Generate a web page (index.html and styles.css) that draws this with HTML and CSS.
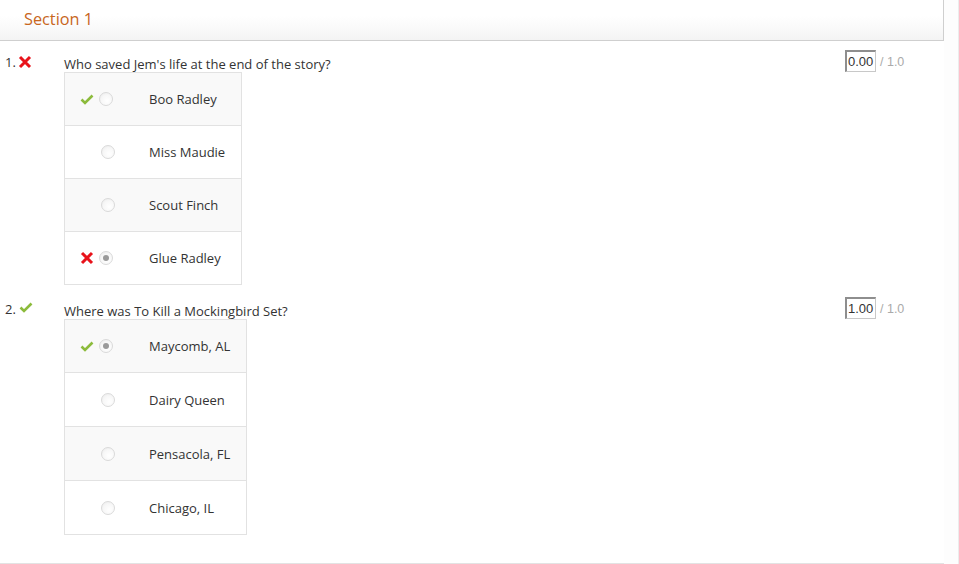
FILE: index.html
```html
<!DOCTYPE html>
<html>
<head>
<meta charset="utf-8">
<link rel="stylesheet" href="styles.css">
</head>
<body>
<div class="layout">
  <div class="page">
    <div class="header"><span class="title">Section 1</span></div>

    <div class="question">
      <div class="qhead">
        <div class="qnum">1.<svg class="mark-x" viewBox="0 0 14 14"><path d="M2 2 L12 12 M12 2 L2 12" stroke="#e8131b" stroke-width="3" stroke-linecap="butt"/></svg></div>
        <div class="qtext">Who saved Jem's life at the end of the story?</div>
        <div class="score"><span class="scorebox">0.00</span><span class="outof">/ 1.0</span></div>
      </div>
      <div class="options opts-1">
        <div class="opt odd">
          <div class="ctl has-mark"><svg class="mark-check" viewBox="0 0 14 11"><path d="M1.5 5.5 L5 9 L12.5 1.5" fill="none" stroke="#8cbb3c" stroke-width="2.6"/></svg><span class="radio"></span></div>
          <div class="lbl">Boo Radley</div>
        </div>
        <div class="opt">
          <div class="ctl"><span class="radio"></span></div>
          <div class="lbl">Miss Maudie</div>
        </div>
        <div class="opt odd">
          <div class="ctl"><span class="radio"></span></div>
          <div class="lbl">Scout Finch</div>
        </div>
        <div class="opt">
          <div class="ctl has-mark"><svg class="mark-x" viewBox="0 0 14 14"><path d="M2 2 L12 12 M12 2 L2 12" stroke="#e8131b" stroke-width="3"/></svg><span class="radio checked"></span></div>
          <div class="lbl">Glue Radley</div>
        </div>
      </div>
    </div>

    <div class="question">
      <div class="qhead">
        <div class="qnum">2.<svg class="mark-check" viewBox="0 0 14 11"><path d="M1.5 5.5 L5 9 L12.5 1.5" fill="none" stroke="#8cbb3c" stroke-width="2.6"/></svg></div>
        <div class="qtext">Where was To Kill a Mockingbird Set?</div>
        <div class="score"><span class="scorebox">1.00</span><span class="outof">/ 1.0</span></div>
      </div>
      <div class="options opts-2">
        <div class="opt odd">
          <div class="ctl has-mark"><svg class="mark-check" viewBox="0 0 14 11"><path d="M1.5 5.5 L5 9 L12.5 1.5" fill="none" stroke="#8cbb3c" stroke-width="2.6"/></svg><span class="radio checked"></span></div>
          <div class="lbl">Maycomb, AL</div>
        </div>
        <div class="opt">
          <div class="ctl"><span class="radio"></span></div>
          <div class="lbl">Dairy Queen</div>
        </div>
        <div class="opt odd">
          <div class="ctl"><span class="radio"></span></div>
          <div class="lbl">Pensacola, FL</div>
        </div>
        <div class="opt">
          <div class="ctl"><span class="radio"></span></div>
          <div class="lbl">Chicago, IL</div>
        </div>
      </div>
    </div>
  </div>
  <div class="strip"></div>
</div>
</body>
</html>
```

FILE: styles.css
```css
html, body {
  margin: 0;
  padding: 0;
  background: #fff;
}
body {
  font-family: "Open Sans", "Liberation Sans", sans-serif;
  font-size: 13px;
  color: #333;
  overflow: hidden;
}
.layout {
  display: flex;
  width: 959px;
  height: 564px;
}
.page {
  width: 944px;
  height: 563px;
  border-bottom: 1px solid #e3e3e3;
  box-sizing: content-box;
}
.strip {
  width: 14px;
  height: 564px;
  border-right: 1px solid #ececec;
  background: #fdfdfd;
}
.header {
  border-bottom: 1px solid #cfcfcf;
  border-right: 1px solid #cfcfcf;
  box-sizing: border-box;
  height: 41px;
  background: linear-gradient(#ffffff 0%, #ffffff 40%, #f4f4f4 100%);
  padding-left: 24px;
  display: flex;
  align-items: center;
  padding-bottom: 3px;
}
.title {
  color: #c8661c;
  font-size: 16.3px;
}
.question {
  padding-top: 9px;
}
.question + .question {
  padding-top: 12px;
}
.qhead {
  display: flex;
  align-items: flex-start;
  height: 22px;
}
.qnum {
  width: 59px;
  padding-left: 5px;
  padding-top: 3px;
  line-height: 18px;
  display: flex;
  align-items: center;
  color: #333;
}
.qnum .mark-x {
  margin-left: 2px;
}
.qnum .mark-check {
  margin-left: 3px;
  margin-top: -3px;
}
.qtext {
  flex: 1;
  padding-top: 5px;
  line-height: 18px;
  font-size: 13px;
}
.score {
  width: 99px;
  display: flex;
  align-items: center;
  font-family: "Liberation Sans", Arial, sans-serif;
  font-size: 13px;
}
.scorebox {
  display: inline-block;
  width: 31px;
  height: 22px;
  box-sizing: border-box;
  border-style: solid;
  border-color: #8e8e8e #c8c8c8 #c8c8c8 #8e8e8e;
  border-width: 2px 1px 1px 2px;
  line-height: 19px;
  padding-left: 1px;
  color: #333;
}
.outof {
  color: #aaa;
  margin-left: 4px;
  margin-top: 1px;
  font-size: 12.5px;
}
.options {
  margin-left: 64px;
  border: 1px solid #e2e2e2;
  border-bottom: none;
  display: flex;
  flex-direction: column;
}
.opts-1 { width: 176px; }
.opts-2 { width: 181px; }
.opt {
  display: flex;
  align-items: center;
  height: 53px;
  border-bottom: 1px solid #e2e2e2;
  box-sizing: border-box;
  background: #fff;
}
.opts-2 .opt + .opt {
  height: 54px;
}
.opt.odd {
  background: #f9f9f9;
}
.ctl {
  width: 84px;
  box-sizing: border-box;
  padding-left: 36px;
  display: flex;
  align-items: center;
}
.ctl.has-mark {
  padding-left: 15px;
}
.ctl .mark-check,
.ctl .mark-x {
  margin-right: 5px;
}
.mark-x {
  width: 14px;
  height: 14px;
  display: block;
}
.mark-check {
  width: 14px;
  height: 11px;
  display: block;
}
.radio {
  display: inline-block;
  width: 14px;
  height: 14px;
  box-sizing: border-box;
  border-radius: 50%;
  border: 1px solid #dadada;
  background: radial-gradient(circle at 60% 65%, #ffffff 0%, #f7f7f7 55%, #e8e8e8 100%);
  position: relative;
}
.radio.checked::after {
  content: "";
  position: absolute;
  left: 3px;
  top: 3px;
  width: 6px;
  height: 6px;
  border-radius: 50%;
  background: #9a9a9a;
}
.lbl {
  font-size: 13px;
  color: #333;
}
```
